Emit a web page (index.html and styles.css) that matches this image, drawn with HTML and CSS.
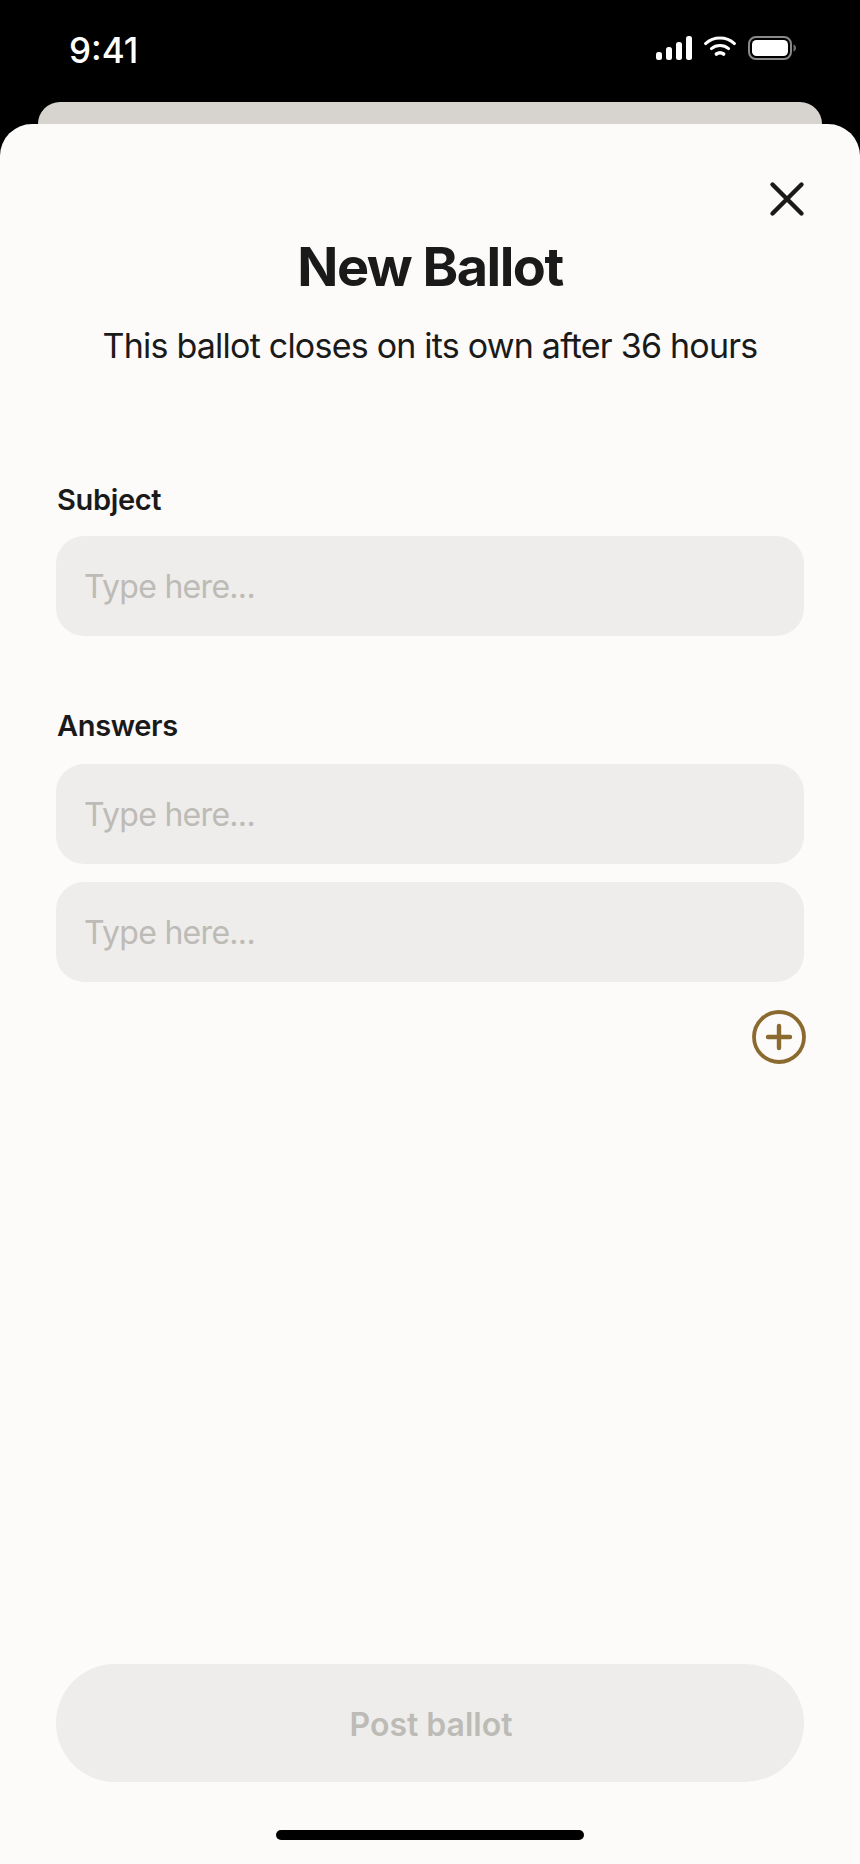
FILE: index.html
```html
<!DOCTYPE html>
<html lang="en">
<head>
    <meta charset="UTF-8">
    <meta name="viewport" content="width=device-width, initial-scale=1.0">
    <title>New Ballot</title>
    <link rel="stylesheet" href="styles.css">
</head>
<body>
    <div class="status-bar">
        <span class="time">9:41</span>
        <div class="status-icons">
            <svg class="icon-signal" width="36" height="24" viewBox="0 0 36 24" fill="#fff">
                <rect x="0" y="16" width="6" height="8" rx="2.5"/>
                <rect x="10" y="11" width="6" height="13" rx="2.5"/>
                <rect x="20" y="6" width="6" height="18" rx="2.5"/>
                <rect x="30" y="0" width="6" height="24" rx="2.5"/>
            </svg>
            <svg class="icon-wifi" width="32" height="22" viewBox="0 0 32 22" fill="none" stroke="#fff" stroke-linecap="round">
                <path d="M1.6 7.6C9.6 0.2 22.4 0.2 30.4 7.6" stroke-width="3"/>
                <path d="M7.4 12.6C12.2 8.6 19.8 8.6 24.6 12.6" stroke-width="3"/>
                <path d="M12.4 18C14.4 16.6 17.6 16.6 19.6 18" stroke-width="3.6"/>
            </svg>
            <svg class="icon-battery" width="48" height="24" viewBox="0 0 48 24">
                <rect x="1" y="1" width="42" height="22" rx="7" fill="none" stroke="#8a8a8a" stroke-width="2"/>
                <rect x="4" y="4" width="36" height="16" rx="4.5" fill="#fff"/>
                <path d="M45.5 8.5C47 9 48 10.4 48 12C48 13.6 47 15 45.5 15.5Z" fill="#6f6f6f"/>
            </svg>
        </div>
    </div>
    <div class="back-card"></div>
    <div class="sheet">
        <div class="sheet-top">
            <button class="close-btn" aria-label="Close">
                <svg width="36" height="36" viewBox="0 0 36 36" fill="none" stroke="#1a1a1a" stroke-width="4.4" stroke-linecap="round">
                    <path d="M3.5 3.5L32.5 32.5M32.5 3.5L3.5 32.5"/>
                </svg>
            </button>
        </div>
        <h1>New Ballot</h1>
        <p class="subtitle">This ballot closes on its own after 36 hours</p>

        <form class="ballot-form">
            <label class="field-label subject-label" for="subject">Subject</label>
            <input class="field" type="text" id="subject" placeholder="Type here...">

            <label class="field-label answers-label" for="answer-1">Answers</label>
            <div class="answers">
                <input class="field" type="text" id="answer-1" placeholder="Type here...">
                <input class="field" type="text" id="answer-2" placeholder="Type here...">
            </div>
            <div class="add-row">
                <button type="button" class="add-btn" aria-label="Add answer">
                    <svg width="54" height="54" viewBox="0 0 54 54" fill="none" stroke="#8a6a2f" stroke-linecap="round">
                        <circle cx="27" cy="27" r="25" stroke-width="3.8"/>
                        <path d="M16 27H38M27 16V38" stroke-width="4.4"/>
                    </svg>
                </button>
            </div>

            <button type="submit" class="post-btn" disabled>Post ballot</button>
        </form>
        <div class="home-bar"></div>
    </div>
</body>
</html>
```

FILE: styles.css
```css
html, body {
    height: 100%;
}
body {
    font-family: Inter, "Liberation Sans", sans-serif;
    margin: 0;
    background: #000;
    color: #1a1a1a;
    display: flex;
    flex-direction: column;
    height: 1864px;
    overflow: hidden;
}
.status-bar {
    height: 102px;
    flex: none;
    display: flex;
    justify-content: space-between;
    box-sizing: border-box;
    padding: 36px 64px 0 69px;
}
.time {
    color: white;
    font-size: 35px;
    font-weight: 500;
    line-height: 28px;
}
.status-icons {
    display: flex;
    align-items: flex-start;
    gap: 12px;
}
.back-card {
    flex: none;
    height: 22px;
    margin: 0 38px;
    background: #d7d4cf;
    border-radius: 24px 24px 0 0;
}
.sheet {
    flex: 1;
    display: flex;
    flex-direction: column;
    background: #fcfbf9;
    border-radius: 32px 32px 0 0;
    padding: 0 56px;
}
.sheet-top {
    display: flex;
    justify-content: flex-end;
    padding: 57px 0 0;
    margin-right: -1px;
}
.close-btn, .add-btn {
    background: none;
    border: none;
    padding: 0;
    display: block;
    line-height: 0;
}
h1 {
    margin: 18px 0 0;
    text-align: center;
    font-size: 54px;
    font-weight: 700;
    line-height: 64px;
    letter-spacing: -1.5px;
}
.subtitle {
    margin: 26px 0 0;
    text-align: center;
    font-size: 34px;
    line-height: 42px;
    font-weight: 400;
    letter-spacing: -0.78px;
}
.ballot-form {
    flex: 1;
    display: flex;
    flex-direction: column;
}
.field-label {
    font-size: 29px;
    font-weight: 600;
    line-height: 34px;
    letter-spacing: -0.35px;
    padding-left: 1px;
}
.subject-label {
    margin-top: 116px;
}
.answers-label {
    margin-top: 73px;
}
.field {
    display: block;
    width: 100%;
    height: 100px;
    box-sizing: border-box;
    margin-top: 19px;
    padding: 0 28px;
    border: none;
    border-radius: 28px;
    background: #eeedeb;
    font-family: inherit;
    font-size: 32px;
    letter-spacing: -0.7px;
    color: #1a1a1a;
}
.field::placeholder {
    color: #bdbbb6;
    opacity: 1;
}
.answers {
    margin-top: 2px;
}
.answers .field + .field {
    margin-top: 18px;
}
.add-row {
    display: flex;
    justify-content: flex-end;
    margin-top: 28px;
    margin-right: -2px;
}
.post-btn {
    margin-top: auto;
    height: 118px;
    border: none;
    border-radius: 59px;
    padding: 2px 0 0 2px;
    background: #eeedeb;
    color: #bdbbb6;
    font-family: inherit;
    font-size: 32px;
    font-weight: 600;
}
.home-bar {
    flex: none;
    align-self: center;
    width: 308px;
    height: 10px;
    margin: 48px 0 24px;
    border-radius: 5px;
    background: #000;
}
```
